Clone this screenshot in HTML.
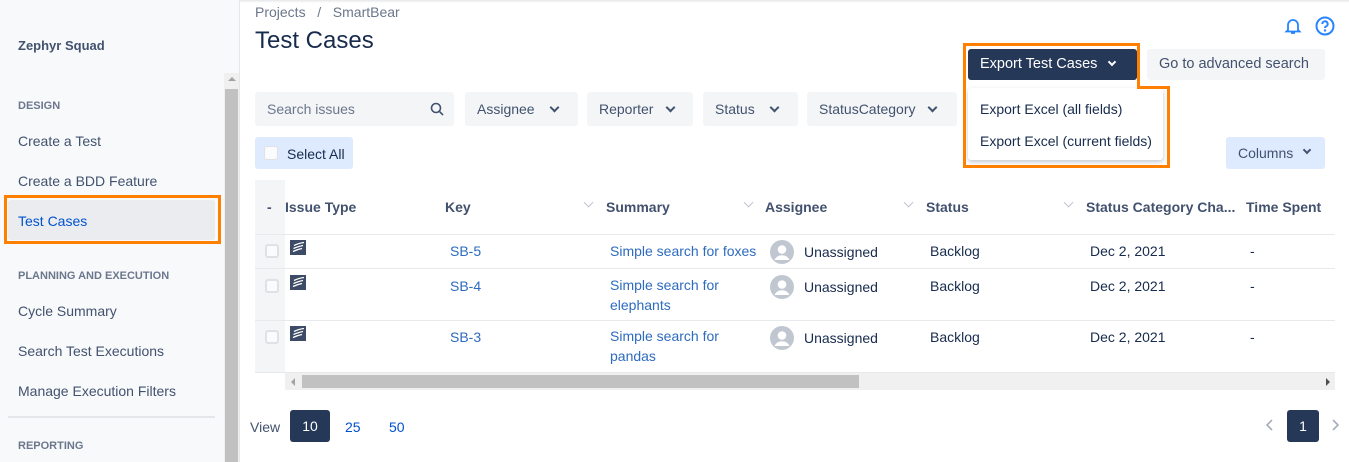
<!DOCTYPE html>
<html><head><meta charset="utf-8"><style>
*{box-sizing:border-box;margin:0;padding:0}
body{width:1349px;height:462px;overflow:hidden;background:#fff;font-family:"Liberation Sans",sans-serif;position:relative;color:#172b4d}
.a{position:absolute;white-space:nowrap}
.side{left:0;top:0;width:240px;height:462px;background:#f8f9fb;border-right:1px solid #e4e6ea}
.sl{font-size:14px;color:#42526e;left:18px}
.sh{font-size:11px;font-weight:bold;color:#6b778c;left:18px}
.btn{background:#f4f5f7;border-radius:3px;font-size:14px;color:#42526e;height:34px;line-height:34px;padding-left:12px}
.chev{display:inline-block;width:7px;height:7px;border-right:2px solid #42526e;border-bottom:2px solid #42526e;transform:rotate(45deg);position:absolute;top:12px}
.th{font-size:14px;font-weight:bold;color:#42526e;top:199px}
.hc{width:7px;height:7px;border-right:1px solid #c1c7d0;border-bottom:1px solid #c1c7d0;transform:rotate(45deg);top:199px}
.td{font-size:14px;color:#172b4d}
.lk{font-size:14px;color:#2d6bbf}
.cb{width:14px;height:14px;border:2px solid #dfe1e6;border-radius:3px;background:#fafbfc}
.hl{left:255px;width:1080px;height:1px;background:#e8e9ec}
</style></head><body>
<svg width="0" height="0" style="position:absolute"><defs>
<symbol id="ic" viewBox="0 0 16 15"><rect width="16" height="15" fill="#3d4b66"/><path d="M4 5.5C7 4 10 3 14 2.5M3.5 8.5C7 7 10 6 13 5.5M3 11.5C6 10 9 9 12 8.5" stroke="#fff" stroke-width="1.3" fill="none"/></symbol>
<symbol id="av" viewBox="0 0 24 24"><circle cx="12" cy="12" r="12" fill="#c1c7d0"/><circle cx="12" cy="9.5" r="4.3" fill="#fff"/><path d="M4.5 20c1.5-3.5 4.5-4.8 7.5-4.8s6 1.3 7.5 4.8" fill="#fff"/></symbol>
</defs></svg>
<div class="a" style="left:0;top:0;width:1349px;height:3px;background:linear-gradient(#e6e7ea,#fff)"></div>
<div class="a side"></div>
<div class="a" style="left:18px;top:38px;font-size:13px;font-weight:bold;color:#42526e">Zephyr Squad</div>
<div class="a sh" style="top:100px">DESIGN</div>
<div class="a sl" style="top:133px">Create a Test</div>
<div class="a sl" style="top:173px">Create a BDD Feature</div>
<div class="a" style="left:8px;top:200px;width:207px;height:40px;background:#ebecf0;border-radius:3px"></div>
<div class="a sl" style="top:213px;color:#0052cc">Test Cases</div>
<div class="a" style="left:4px;top:195px;width:217px;height:49px;border:3px solid #ff8000"></div>
<div class="a sh" style="top:270px">PLANNING AND EXECUTION</div>
<div class="a sl" style="top:303px">Cycle Summary</div>
<div class="a sl" style="top:343px">Search Test Executions</div>
<div class="a sl" style="top:383px">Manage Execution Filters</div>
<div class="a" style="left:8px;top:416px;width:207px;height:2px;background:#e4e6ea"></div>
<div class="a sh" style="top:440px">REPORTING</div>
<div class="a" style="left:224px;top:73px;width:15px;height:389px;background:#f0f0f0"></div>
<div class="a" style="left:225px;top:89px;width:13px;height:373px;background:#c1c1c1"></div>
<div class="a" style="left:228px;top:77px;width:0;height:0;border-left:4px solid transparent;border-right:4px solid transparent;border-bottom:4px solid #a3a3a3"></div>

<div class="a" style="left:255px;top:4px;font-size:14px;color:#6b778c">Projects &nbsp; / &nbsp; SmartBear</div>
<div class="a" style="left:255px;top:27px;font-size:24px;color:#172b4d">Test Cases</div>
<svg class="a" style="left:1283px;top:16px" width="20" height="20" viewBox="0 0 20 20"><path d="M5 14V9a5 5 0 0 1 10 0v5l1.5 1.5h-13z M8 17h4" fill="none" stroke="#2684ff" stroke-width="1.8"/></svg>
<svg class="a" style="left:1314px;top:15px" width="22" height="22" viewBox="0 0 22 22"><circle cx="11" cy="11" r="8.5" fill="none" stroke="#2684ff" stroke-width="2"/><path d="M8.3 9a2.7 2.7 0 1 1 3.7 2.5c-.7.3-1 .8-1 1.5" fill="none" stroke="#2684ff" stroke-width="2"/><circle cx="11" cy="15.5" r="1.2" fill="#2684ff"/></svg>

<div class="a" style="left:968px;top:49px;width:169px;height:31px;background:#253858;border-radius:3px;color:#fff;font-size:14.5px;line-height:31px;padding-left:12px">Export Test Cases<span class="chev" style="left:141px;top:10px;width:6px;height:6px;border-color:#fff"></span></div>
<div class="a btn" style="left:1147px;top:49px;width:178px;height:31px;line-height:31px;font-size:14.5px">Go to advanced search</div>
<div class="a" style="left:968px;top:88px;width:195px;height:72px;background:#fff;border-radius:3px;box-shadow:0 2px 5px rgba(9,30,66,.25)"></div>
<div class="a td" style="left:980px;top:101px">Export Excel (all fields)</div>
<div class="a td" style="left:980px;top:133px">Export Excel (current fields)</div>
<svg class="a" style="left:962px;top:42px" width="210" height="127"><path d="M2.5 2.5H176.5V45.5H206.5V124.5H2.5Z" fill="none" stroke="#ff8000" stroke-width="3"/></svg>

<div class="a btn" style="left:255px;top:92px;width:199px;color:#6b778c">Search issues</div>
<svg class="a" style="left:430px;top:102px" width="14" height="14"><circle cx="6" cy="6" r="4.5" fill="none" stroke="#42526e" stroke-width="1.6"/><path d="M9.3 9.3L13 13" stroke="#42526e" stroke-width="1.6"/></svg>
<div class="a btn" style="left:465px;top:92px;width:113px">Assignee<span class="chev" style="left:86px"></span></div>
<div class="a btn" style="left:587px;top:92px;width:106px">Reporter<span class="chev" style="left:80px"></span></div>
<div class="a btn" style="left:703px;top:92px;width:95px">Status<span class="chev" style="left:68px"></span></div>
<div class="a btn" style="left:807px;top:92px;width:150px">StatusCategory<span class="chev" style="left:122px"></span></div>
<div class="a" style="left:255px;top:137px;width:98px;height:32px;background:#deebff;border-radius:3px"></div>
<div class="a cb" style="left:264px;top:146px;border-width:1px"></div>
<div class="a td" style="left:287px;top:146px">Select All</div>
<div class="a" style="left:1226px;top:137px;width:99px;height:32px;background:#deebff;border-radius:3px;font-size:14px;color:#42526e;line-height:32px;padding-left:12px">Columns<span class="chev" style="left:78px;top:10px;width:6px;height:6px"></span></div>

<div class="a" style="left:255px;top:180px;width:30px;height:193px;background:#f4f5f7"></div>
<div class="a th" style="left:267px">-</div>
<div class="a th" style="left:285px">Issue Type</div>
<div class="a th" style="left:445px">Key</div>
<div class="a hc" style="left:585px"></div>
<div class="a th" style="left:606px">Summary</div>
<div class="a hc" style="left:745px"></div>
<div class="a th" style="left:765px">Assignee</div>
<div class="a hc" style="left:905px"></div>
<div class="a th" style="left:926px">Status</div>
<div class="a hc" style="left:1065px"></div>
<div class="a th" style="left:1086px">Status Category Cha...</div>
<div class="a th" style="left:1246px">Time Spent</div>
<div class="a hl" style="top:234px"></div>
<div class="a hl" style="top:268px"></div>
<div class="a hl" style="top:320px"></div>
<div class="a hl" style="top:372px"></div>

<div class="a cb" style="left:265px;top:244px"></div><svg class="a" style="left:290px;top:240px" width="16" height="15"><use href="#ic"/></svg>
<div class="a lk" style="left:450px;top:243px">SB-5</div>
<div class="a lk" style="left:610px;top:243px">Simple search for foxes</div>
<svg class="a" style="left:770px;top:240px" width="24" height="24"><use href="#av"/></svg><div class="a td" style="left:804px;top:244px">Unassigned</div>
<div class="a td" style="left:930px;top:243px">Backlog</div><div class="a td" style="left:1090px;top:243px">Dec 2, 2021</div><div class="a td" style="left:1250px;top:243px">-</div>

<div class="a cb" style="left:265px;top:279px"></div><svg class="a" style="left:290px;top:275px" width="16" height="15"><use href="#ic"/></svg>
<div class="a lk" style="left:450px;top:278px">SB-4</div>
<div class="a lk" style="left:610px;line-height:20px;top:275px">Simple search for<br>elephants</div>
<svg class="a" style="left:770px;top:275px" width="24" height="24"><use href="#av"/></svg><div class="a td" style="left:804px;top:279px">Unassigned</div>
<div class="a td" style="left:930px;top:278px">Backlog</div><div class="a td" style="left:1090px;top:278px">Dec 2, 2021</div><div class="a td" style="left:1250px;top:278px">-</div>

<div class="a cb" style="left:265px;top:330px"></div><svg class="a" style="left:290px;top:326px" width="16" height="15"><use href="#ic"/></svg>
<div class="a lk" style="left:450px;top:329px">SB-3</div>
<div class="a lk" style="left:610px;top:326px;line-height:20px">Simple search for<br>pandas</div>
<svg class="a" style="left:770px;top:326px" width="24" height="24"><use href="#av"/></svg><div class="a td" style="left:804px;top:330px">Unassigned</div>
<div class="a td" style="left:930px;top:329px">Backlog</div><div class="a td" style="left:1090px;top:329px">Dec 2, 2021</div><div class="a td" style="left:1250px;top:329px">-</div>

<div class="a" style="left:285px;top:373px;width:1050px;height:17px;background:#f0f0f0"></div>
<div class="a" style="left:302px;top:375px;width:557px;height:13px;background:#c1c1c1"></div>
<div class="a" style="left:291px;top:378px;border-top:4px solid transparent;border-bottom:4px solid transparent;border-right:4px solid #a3a3a3"></div>
<div class="a" style="left:1326px;top:378px;border-top:4px solid transparent;border-bottom:4px solid transparent;border-left:4px solid #505050"></div>

<div class="a td" style="left:250px;top:419px;color:#42526e">View</div>
<div class="a" style="left:290px;top:410px;width:40px;height:32px;background:#253858;border-radius:3px;color:#fff;font-size:14px;line-height:32px;text-align:center">10</div>
<div class="a lk" style="left:345px;top:419px;color:#0052cc">25</div>
<div class="a lk" style="left:389px;top:419px;color:#0052cc">50</div>
<svg class="a" style="left:1265px;top:418px" width="10" height="14"><path d="M7 2L2 7l5 5" fill="none" stroke="#a5adba" stroke-width="1.6"/></svg>
<div class="a" style="left:1287px;top:410px;width:32px;height:32px;background:#253858;border-radius:3px;color:#fff;font-size:14px;line-height:32px;text-align:center">1</div>
<svg class="a" style="left:1330px;top:418px" width="10" height="14"><path d="M3 2l5 5-5 5" fill="none" stroke="#a5adba" stroke-width="1.6"/></svg>
</body></html>
